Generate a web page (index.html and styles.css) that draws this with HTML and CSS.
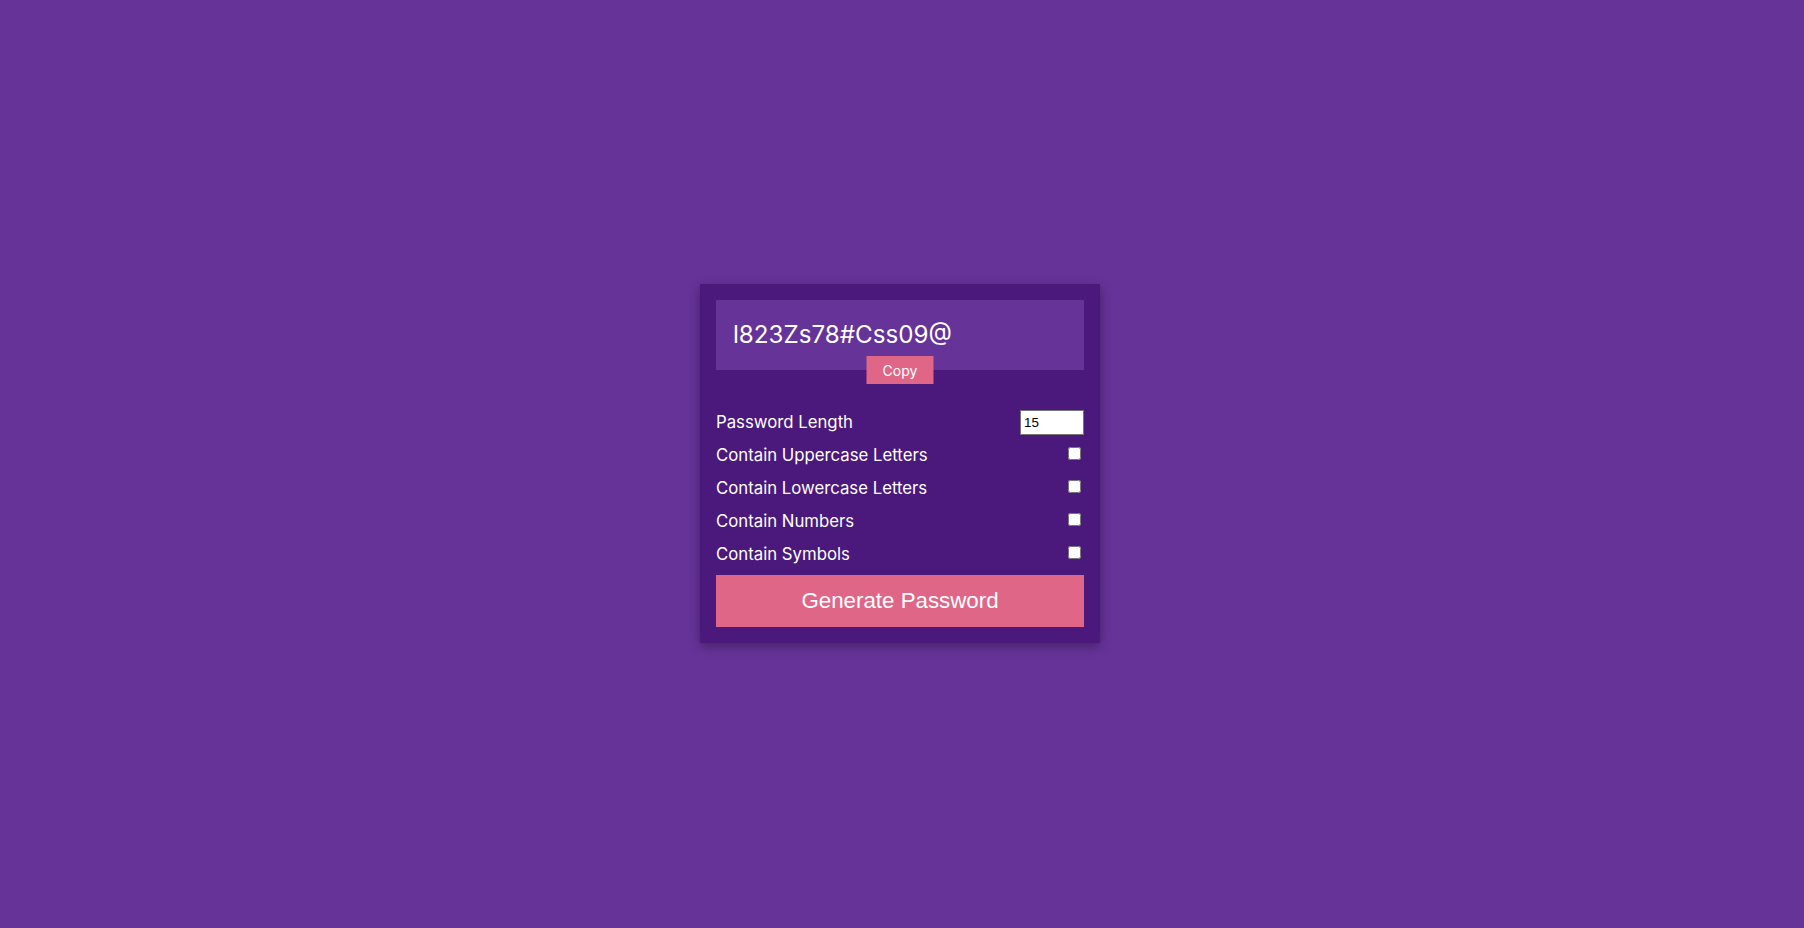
FILE: index.html
```html
<!DOCTYPE html>
<html lang="en">
<head>
<meta charset="utf-8">
<title>Password Generator</title>
<link rel="stylesheet" href="styles.css">
</head>
<body>
<main class="card">
  <div class="result">
    <span class="result-text">l823Zs78#Css09@</span>
    <button class="copy-btn">Copy</button>
  </div>
  <div class="settings">
    <div class="setting">
      <label>Password Length</label>
      <input class="length-input" type="number" value="15">
    </div>
    <div class="setting">
      <label>Contain Uppercase Letters</label>
      <input class="check" type="checkbox">
    </div>
    <div class="setting">
      <label>Contain Lowercase Letters</label>
      <input class="check" type="checkbox">
    </div>
    <div class="setting">
      <label>Contain Numbers</label>
      <input class="check" type="checkbox">
    </div>
    <div class="setting">
      <label>Contain Symbols</label>
      <input class="check" type="checkbox">
    </div>
  </div>
  <button class="generate-btn">Generate Password</button>
</main>
</body>
</html>
```

FILE: styles.css
```css
* {
  box-sizing: border-box;
}

html, body {
  height: 100%;
}

body {
  margin: 0;
  padding-right: 4px;
  padding-bottom: 1px;
  background: #663399;
  color: #ffffff;
  font-family: Inter, "Open Sans", sans-serif;
  display: flex;
  align-items: center;
  justify-content: center;
}

.card {
  width: 400px;
  background: #4b197b;
  padding: 16px;
  box-shadow: 0 3px 10px rgba(0, 0, 0, 0.35);
}

.result {
  position: relative;
  height: 70px;
  background: #663399;
  display: flex;
  align-items: center;
  padding: 0 17px;
  margin-bottom: 40px;
}

.result-text {
  font-size: 24.2px;
  line-height: 1;
  padding-top: 1px;
}

.copy-btn {
  position: absolute;
  left: 50%;
  bottom: -14px;
  transform: translateX(-50%);
  width: 67px;
  height: 28px;
  border: none;
  background: #e06687;
  color: #ffffff;
  font-family: Inter, "Open Sans", sans-serif;
  font-size: 14px;
  padding: 0;
  cursor: pointer;
}

.settings {
  display: flex;
  flex-direction: column;
  gap: 8px;
  margin-bottom: 8px;
}

.setting {
  height: 25px;
  display: flex;
  align-items: center;
  justify-content: space-between;
}

.setting label {
  font-size: 16.75px;
  line-height: 1;
}

.length-input {
  width: 64px;
  height: 25px;
  margin: 0;
  padding: 1px 3px;
  border: 1px solid #767676;
  background: #ffffff;
  color: #000000;
  font-family: "Liberation Sans", Arial, sans-serif;
  font-size: 13.333px;
  appearance: textfield;
  -moz-appearance: textfield;
}

.length-input::-webkit-inner-spin-button,
.length-input::-webkit-outer-spin-button {
  -webkit-appearance: none;
  margin: 0;
}

.check {
  width: 13px;
  height: 13px;
  margin: 0 3px 5px 4px;
}

.generate-btn {
  display: block;
  width: 100%;
  height: 52px;
  border: none;
  background: #e06687;
  color: #ffffff;
  font-family: "Liberation Sans", Arial, sans-serif;
  font-size: 22.3px;
  cursor: pointer;
}
```
